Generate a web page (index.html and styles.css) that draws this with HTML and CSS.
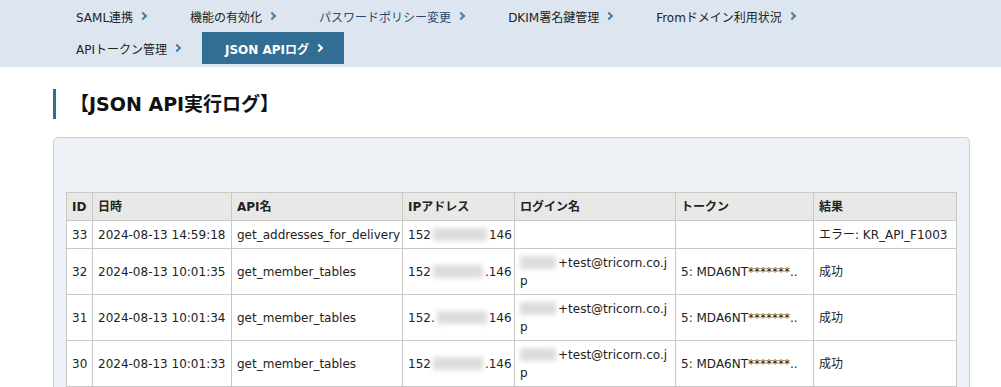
FILE: index.html
```html
<!doctype html>
<html>
<head>
<meta charset="utf-8">
<title>JSON APIログ</title>
<link rel="stylesheet" href="styles.css">
</head>
<body>
	<div class="subnav">
		<ul class="subnav-list">
			<li><a href="#">SAML連携<i class="chev"></i></a></li>
			<li><a href="#">機能の有効化<i class="chev"></i></a></li>
			<li><a href="#" class="visited">パスワードポリシー変更<i class="chev"></i></a></li>
			<li><a href="#">DKIM署名鍵管理<i class="chev"></i></a></li>
			<li><a href="#">Fromドメイン利用状況<i class="chev"></i></a></li>
			<li><a href="#">APIトークン管理<i class="chev"></i></a></li>
			<li class="active"><a href="#">JSON APIログ<i class="chev"></i></a></li>
		</ul>
	</div>
	<div class="main">
		<h2 class="page-title">【JSON API実行ログ】</h2>
		<div class="panel">
			<table class="log-table">
				<thead>
					<tr>
						<th class="c-id">ID</th>
						<th class="c-date">日時</th>
						<th class="c-api">API名</th>
						<th class="c-ip">IPアドレス</th>
						<th class="c-login">ログイン名</th>
						<th class="c-token">トークン</th>
						<th class="c-result">結果</th>
					</tr>
				</thead>
				<tbody>
					<tr>
						<td>33</td>
						<td>2024-08-13 14:59:18</td>
						<td>get_addresses_for_delivery</td>
						<td class="nowrap">152<span class="redact ip-wide"></span>146</td>
						<td></td>
						<td></td>
						<td>エラー: KR_API_F1003</td>
					</tr>
					<tr>
						<td>32</td>
						<td>2024-08-13 10:01:35</td>
						<td>get_member_tables</td>
						<td class="nowrap">152<span class="redact ip"></span>.146</td>
						<td class="mail"><span class="redact name"></span>+test@tricorn.co.jp</td>
						<td>5: MDA6NT*******..</td>
						<td>成功</td>
					</tr>
					<tr>
						<td>31</td>
						<td>2024-08-13 10:01:34</td>
						<td>get_member_tables</td>
						<td class="nowrap">152.<span class="redact ip"></span>146</td>
						<td class="mail"><span class="redact name"></span>+test@tricorn.co.jp</td>
						<td>5: MDA6NT*******..</td>
						<td>成功</td>
					</tr>
					<tr>
						<td>30</td>
						<td>2024-08-13 10:01:33</td>
						<td>get_member_tables</td>
						<td class="nowrap">152<span class="redact ip"></span>.146</td>
						<td class="mail"><span class="redact name"></span>+test@tricorn.co.jp</td>
						<td>5: MDA6NT*******..</td>
						<td>成功</td>
					</tr>
				</tbody>
			</table>
		</div>
	</div>
</body>
</html>
```

FILE: styles.css
```css
/* 管理画面 共通 */
html,body{
	margin:0;
	padding:0;
}
body{
	font-family:"DejaVu Sans","Noto Sans CJK JP",sans-serif;
	font-size:12px;
	color:#222;
	background:#fff;
}
/* サブナビ */
.subnav{
	background-color:#dde6f0;
	padding:0 0 3px 54px;
}
.subnav-list{
	list-style:none;
	margin:0;
	padding:0;
	width:880px;
	display:flex;
	flex-wrap:wrap;
}
.subnav-list li{
	height:32px;
}
.subnav-list a{
	display:flex;
	align-items:center;
	height:32px;
	padding:0 22px;
	color:#222;
	text-decoration:none;
}
.subnav-list a.visited{
	color:#2a4a6a;
}
.subnav-list .chev{
	display:inline-block;
	width:4px;
	height:4px;
	margin-left:7px;
	border-top:2px solid #4a7ea6;
	border-right:2px solid #4a7ea6;
	transform:rotate(45deg);
}
.subnav-list .active a{
	background-color:#326e93;
	color:#fff;
	font-weight:bold;
	padding-left:23px;
}
.subnav-list .active .chev{
	border-color:#fff;
}
/* 本文 */
.main{
	padding:22px 31px 0 53px;
}
.page-title{
	margin:0 0 18px 0;
	height:30px;
	line-height:30px;
	border-left:3px solid #336e91;
	padding-left:14px;
	font-size:19px;
	font-weight:bold;
	color:#111;
}
.panel{
	background-color:#eef2f6;
	border:1px solid #c5cde0;
	border-radius:5px;
	padding:54px 13px 40px 12px;
}
.log-table{
	width:890px;
	table-layout:fixed;
	border-collapse:collapse;
	background:#fff;
}
.log-table th,
.log-table td{
	box-sizing:border-box;
	border:1px solid #c8c8c8;
	padding:5px 5px 4px 5px;
	line-height:18px;
	text-align:left;
	vertical-align:middle;
}
.log-table th{
	background-color:#e8e8e6;
	font-weight:bold;
}
.log-table .c-id{width:26px;}
.log-table .c-date{width:139px;}
.log-table .c-api{width:171px;}
.log-table .c-ip{width:112px;}
.log-table .c-login{width:161px;}
.log-table .c-token{width:138px;}
.log-table .c-result{width:143px;}
.log-table .nowrap{
	white-space:nowrap;
	overflow:hidden;
}
.log-table .mail{
	word-break:break-all;
}
/* 個人情報のぼかし */
.redact{
	display:inline-block;
	height:13px;
	vertical-align:-2px;
	background:#dcdcdc;
	filter:blur(2.5px);
}
.redact.ip-wide{width:54px;margin:0 2px;}
.redact.ip{width:50px;margin:0 2px;}
.redact.name{width:36px;margin-right:2px;}
```
